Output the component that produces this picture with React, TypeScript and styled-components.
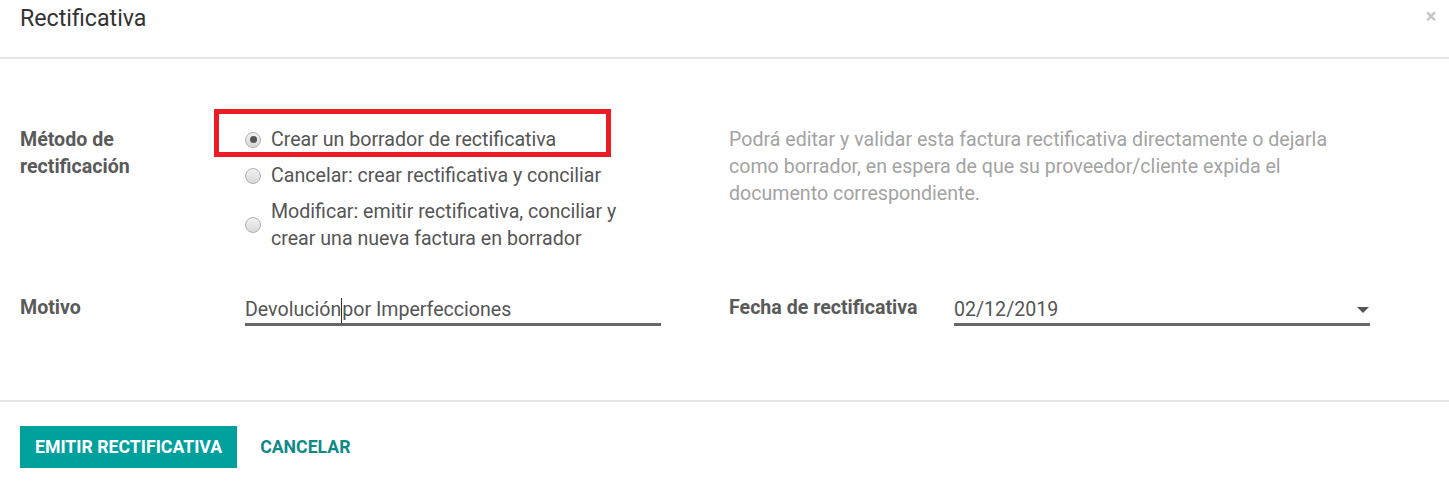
import React from "react";
import styled, { createGlobalStyle } from "styled-components";

const GlobalStyle = createGlobalStyle`
  html, body { margin: 0; padding: 0; background: #fff; }
  body { font-family: Roboto, "Noto Sans", Arial, sans-serif; }
  * { box-sizing: border-box; }
`;

const Dialog = styled.div`
  width: 1449px;
  height: 484px;
  background: #fff;
  display: flex;
  flex-direction: column;
`;

const Header = styled.div`
  height: 59px;
  border-bottom: 2px solid #e6e6e6;
  padding: 4px 20px 0 20px;
  display: flex;
  justify-content: space-between;
  align-items: flex-start;
`;

const Title = styled.h4`
  margin: 0;
  font-size: 23.2px;
  line-height: 28px;
  font-weight: 400;
  color: #333;
`;

const Close = styled.button`
  border: 0;
  background: none;
  padding: 0;
  margin: 4px -10px 0 0;
  width: 16px;
  height: 16px;
  color: #c4c4c4;
  font-size: 20px;
  line-height: 16px;
  font-family: Roboto, Arial, sans-serif;
  font-weight: 700;
`;

const Body = styled.div`
  padding: 67px 20px 0 20px;
  flex: 1;
  display: flex;
  flex-direction: column;
  gap: 42px;
`;

const Row = styled.div`
  display: grid;
  grid-template-columns: 225px 416px 68px 225px 416px;
  align-items: start;
  font-size: 19.6px;
  line-height: 27px;
`;

const Label = styled.div`
  font-weight: 700;
  color: #5a5a5a;
`;

const RadioList = styled.div`
  display: flex;
  flex-direction: column;
  align-items: flex-start;
  gap: 9px;
`;

const RadioItem = styled.label`
  position: relative;
  display: inline-flex;
  align-items: center;
  gap: 10px;
  color: #555;
`;

const RadioCircle = styled.span<{ $checked?: boolean }>`
  flex: none;
  width: 16px;
  height: 16px;
  border-radius: 50%;
  border: 1px solid #b0b0b0;
  background: linear-gradient(#f2f2f2, #d8d8d8);
  display: flex;
  align-items: center;
  justify-content: center;
  &::after {
    content: "";
    display: ${(p) => (p.$checked ? "block" : "none")};
    width: 7px;
    height: 7px;
    border-radius: 50%;
    background: #555;
  }
`;

const Highlight = styled.span`
  position: absolute;
  left: -31px;
  right: -55px;
  top: -17px;
  bottom: -4px;
  border: 5px solid #ed1c24;
  pointer-events: none;
`;

const Help = styled.div`
  grid-column: 4 / 6;
  color: #a3a3a3;
  padding-right: 25px;
`;

const Field = styled.div`
  display: flex;
  align-items: center;
  justify-content: space-between;
  color: #555;
  padding-top: 2px;
  height: 32px;
  border-bottom: 3px solid #666;
`;

const Caret = styled.span`
  display: inline-block;
  width: 1px;
  height: 25px;
  background: #333;
  vertical-align: -7px;
`;

const DropArrow = styled.span`
  width: 0;
  height: 0;
  border-left: 6px solid transparent;
  border-right: 6px solid transparent;
  border-top: 6px solid #555;
  margin-right: 1px;
`;

const Footer = styled.div`
  border-top: 2px solid #e6e6e6;
  height: 84px;
  padding: 24px 20px 0 20px;
  display: flex;
  align-items: flex-start;
  gap: 8px;
`;

const Button = styled.button<{ $primary?: boolean }>`
  height: 42px;
  padding: 0 15px;
  border: 0;
  border-radius: 0;
  font-family: Roboto, Arial, sans-serif;
  font-size: 17.7px;
  font-weight: 700;
  text-transform: uppercase;
  background: ${(p) => (p.$primary ? "#00a09d" : "transparent")};
  color: ${(p) => (p.$primary ? "#fff" : "#0e8a87")};
`;

export default function App() {
  return (
    <>
      <GlobalStyle />
      <Dialog>
        <Header>
          <Title>Rectificativa</Title>
          <Close aria-label="Cerrar">×</Close>
        </Header>
        <Body>
          <Row>
            <Label>
              Método de
              <br />
              rectificación
            </Label>
            <RadioList>
              <RadioItem>
                <Highlight />
                <RadioCircle $checked />
                <span>Crear un borrador de rectificativa</span>
              </RadioItem>
              <RadioItem>
                <RadioCircle />
                <span>Cancelar: crear rectificativa y conciliar</span>
              </RadioItem>
              <RadioItem>
                <RadioCircle />
                <span>
                  Modificar: emitir rectificativa, conciliar y crear una nueva
                  factura en borrador
                </span>
              </RadioItem>
            </RadioList>
            <span />
            <Help>
              Podrá editar y validar esta factura rectificativa directamente o
              dejarla como borrador, en espera de que su proveedor/cliente
              expida el documento correspondiente.
            </Help>
          </Row>
          <Row>
            <Label>Motivo</Label>
            <Field>
              <span>
                Devolución
                <Caret />
                por Imperfecciones
              </span>
            </Field>
            <span />
            <Label>Fecha de rectificativa</Label>
            <Field>
              <span>02/12/2019</span>
              <DropArrow />
            </Field>
          </Row>
        </Body>
        <Footer>
          <Button $primary>Emitir rectificativa</Button>
          <Button>Cancelar</Button>
        </Footer>
      </Dialog>
    </>
  );
}
